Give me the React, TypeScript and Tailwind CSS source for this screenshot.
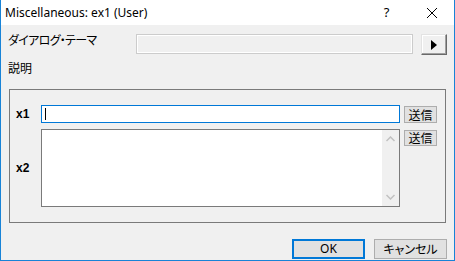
import React from "react";

const jp = "font-['Noto_Sans_CJK_JP',sans-serif] [font-feature-settings:'palt']";

export default function App() {
  return (
    <div className="w-[455px] h-[261px] flex flex-col border-l border-r border-b border-[#1883d7] bg-white overflow-hidden">
      {/* Title bar */}
      <div className="h-[25px] flex items-center bg-white shrink-0">
        <div className="pl-[4px] flex-1 text-[12px] leading-none text-black font-['Noto_Sans',sans-serif]">
          Miscellaneous: ex1 (User)
        </div>
        <div className="w-[45px] h-full flex items-center justify-center text-[13px] text-black font-['Noto_Sans',sans-serif]">
          ?
        </div>
        <div className="w-[45px] h-full flex items-center justify-center">
          <svg width="10" height="10" viewBox="0 0 10 10">
            <path d="M0 0 L10 10 M10 0 L0 10" stroke="#000" strokeWidth="1" />
          </svg>
        </div>
      </div>

      {/* Content */}
      <div className="flex-1 bg-[#f0f0f0] flex flex-col pl-[7px] pr-[7px] pt-[9px]">
        {/* Theme row */}
        <div className="flex items-start h-[20px]">
          <div className={`-mt-[1px] w-[128px] text-[12px] leading-[14px] tracking-[-0.7px] text-black ${jp}`}>ダイアログ・テーマ</div>
          <div className="w-[277px] h-[20px] border border-[#cccccc] bg-[#f0f0f0] shadow-[inset_0_0_0_1px_#ffffff]" />
          <div className="ml-[8px] w-[26px] h-[21px] flex items-center justify-center bg-[#f0f0f0] border-t border-l border-t-[#e3e3e3] border-l-[#e3e3e3] border-r border-b border-r-[#696969] border-b-[#696969] shadow-[inset_-1px_-1px_0_#a0a0a0,inset_1px_1px_0_#ffffff]">
            <svg width="6" height="10" viewBox="0 0 6 10">
              <path d="M0 0 L6 5 L0 10 Z" fill="#000" />
            </svg>
          </div>
        </div>

        {/* Description */}
        <div className={`mt-[7px] h-[14px] text-[12px] leading-[14px] text-black ${jp}`}>説明</div>

        {/* Group box */}
        <div className="mt-[14px] ml-[1px] w-[437px] h-[134px] border border-[#7a7a7a] flex flex-col pt-[15px] pr-[8px]">
          {/* x1 row */}
          <div className="flex items-start">
            <div className="w-[31px] h-[18px] pl-[6px] flex items-center text-[12px] font-bold text-black font-['Liberation_Sans',sans-serif]">
              x1
            </div>
            <div className="w-[359px] h-[18px] border border-[#0078d7] bg-white flex items-center pl-[3px]">
              <div className="w-px h-[12px] bg-black" />
            </div>
            <div className={`ml-[4px] mt-[1px] w-[33px] h-[17px] border border-[#adadad] bg-[#e1e1e1] flex items-center justify-center text-[12px] leading-none text-black ${jp}`}>
              送信
            </div>
          </div>

          {/* x2 row */}
          <div className="flex items-start mt-[6px]">
            <div className="w-[31px] h-[78px] pl-[6px] flex items-center text-[12px] font-bold text-black font-['Liberation_Sans',sans-serif]">
              x2
            </div>
            <div className="w-[359px] h-[78px] border border-[#7a7a7a] bg-white flex justify-end">
              <div className="w-[17px] h-full bg-[#f0f0f0] flex flex-col items-center justify-between py-[6px]">
                <svg width="9" height="6" viewBox="0 0 9 6">
                  <path d="M0.5 5 L4.5 1 L8.5 5" stroke="#c1c1c1" strokeWidth="1.5" fill="none" />
                </svg>
                <svg width="9" height="6" viewBox="0 0 9 6">
                  <path d="M0.5 1 L4.5 5 L8.5 1" stroke="#c1c1c1" strokeWidth="1.5" fill="none" />
                </svg>
              </div>
            </div>
            <div className={`ml-[4px] mt-[1px] w-[33px] h-[16px] border border-[#adadad] bg-[#e1e1e1] flex items-center justify-center text-[12px] leading-none text-black ${jp}`}>
              送信
            </div>
          </div>
        </div>

        {/* Bottom buttons */}
        <div className="mt-[16px] flex justify-end gap-[9px]">
          <div className="w-[73px] h-[20px] border-2 border-[#0078d7] bg-[#e1e1e1] flex items-center justify-center text-[12px] leading-none text-black font-['Noto_Sans',sans-serif]">
            OK
          </div>
          <div className={`w-[73px] h-[20px] border border-[#adadad] bg-[#e1e1e1] flex items-center justify-center text-[12px] leading-none text-black ${jp}`}>
            キャンセル
          </div>
        </div>
      </div>
    </div>
  );
}
